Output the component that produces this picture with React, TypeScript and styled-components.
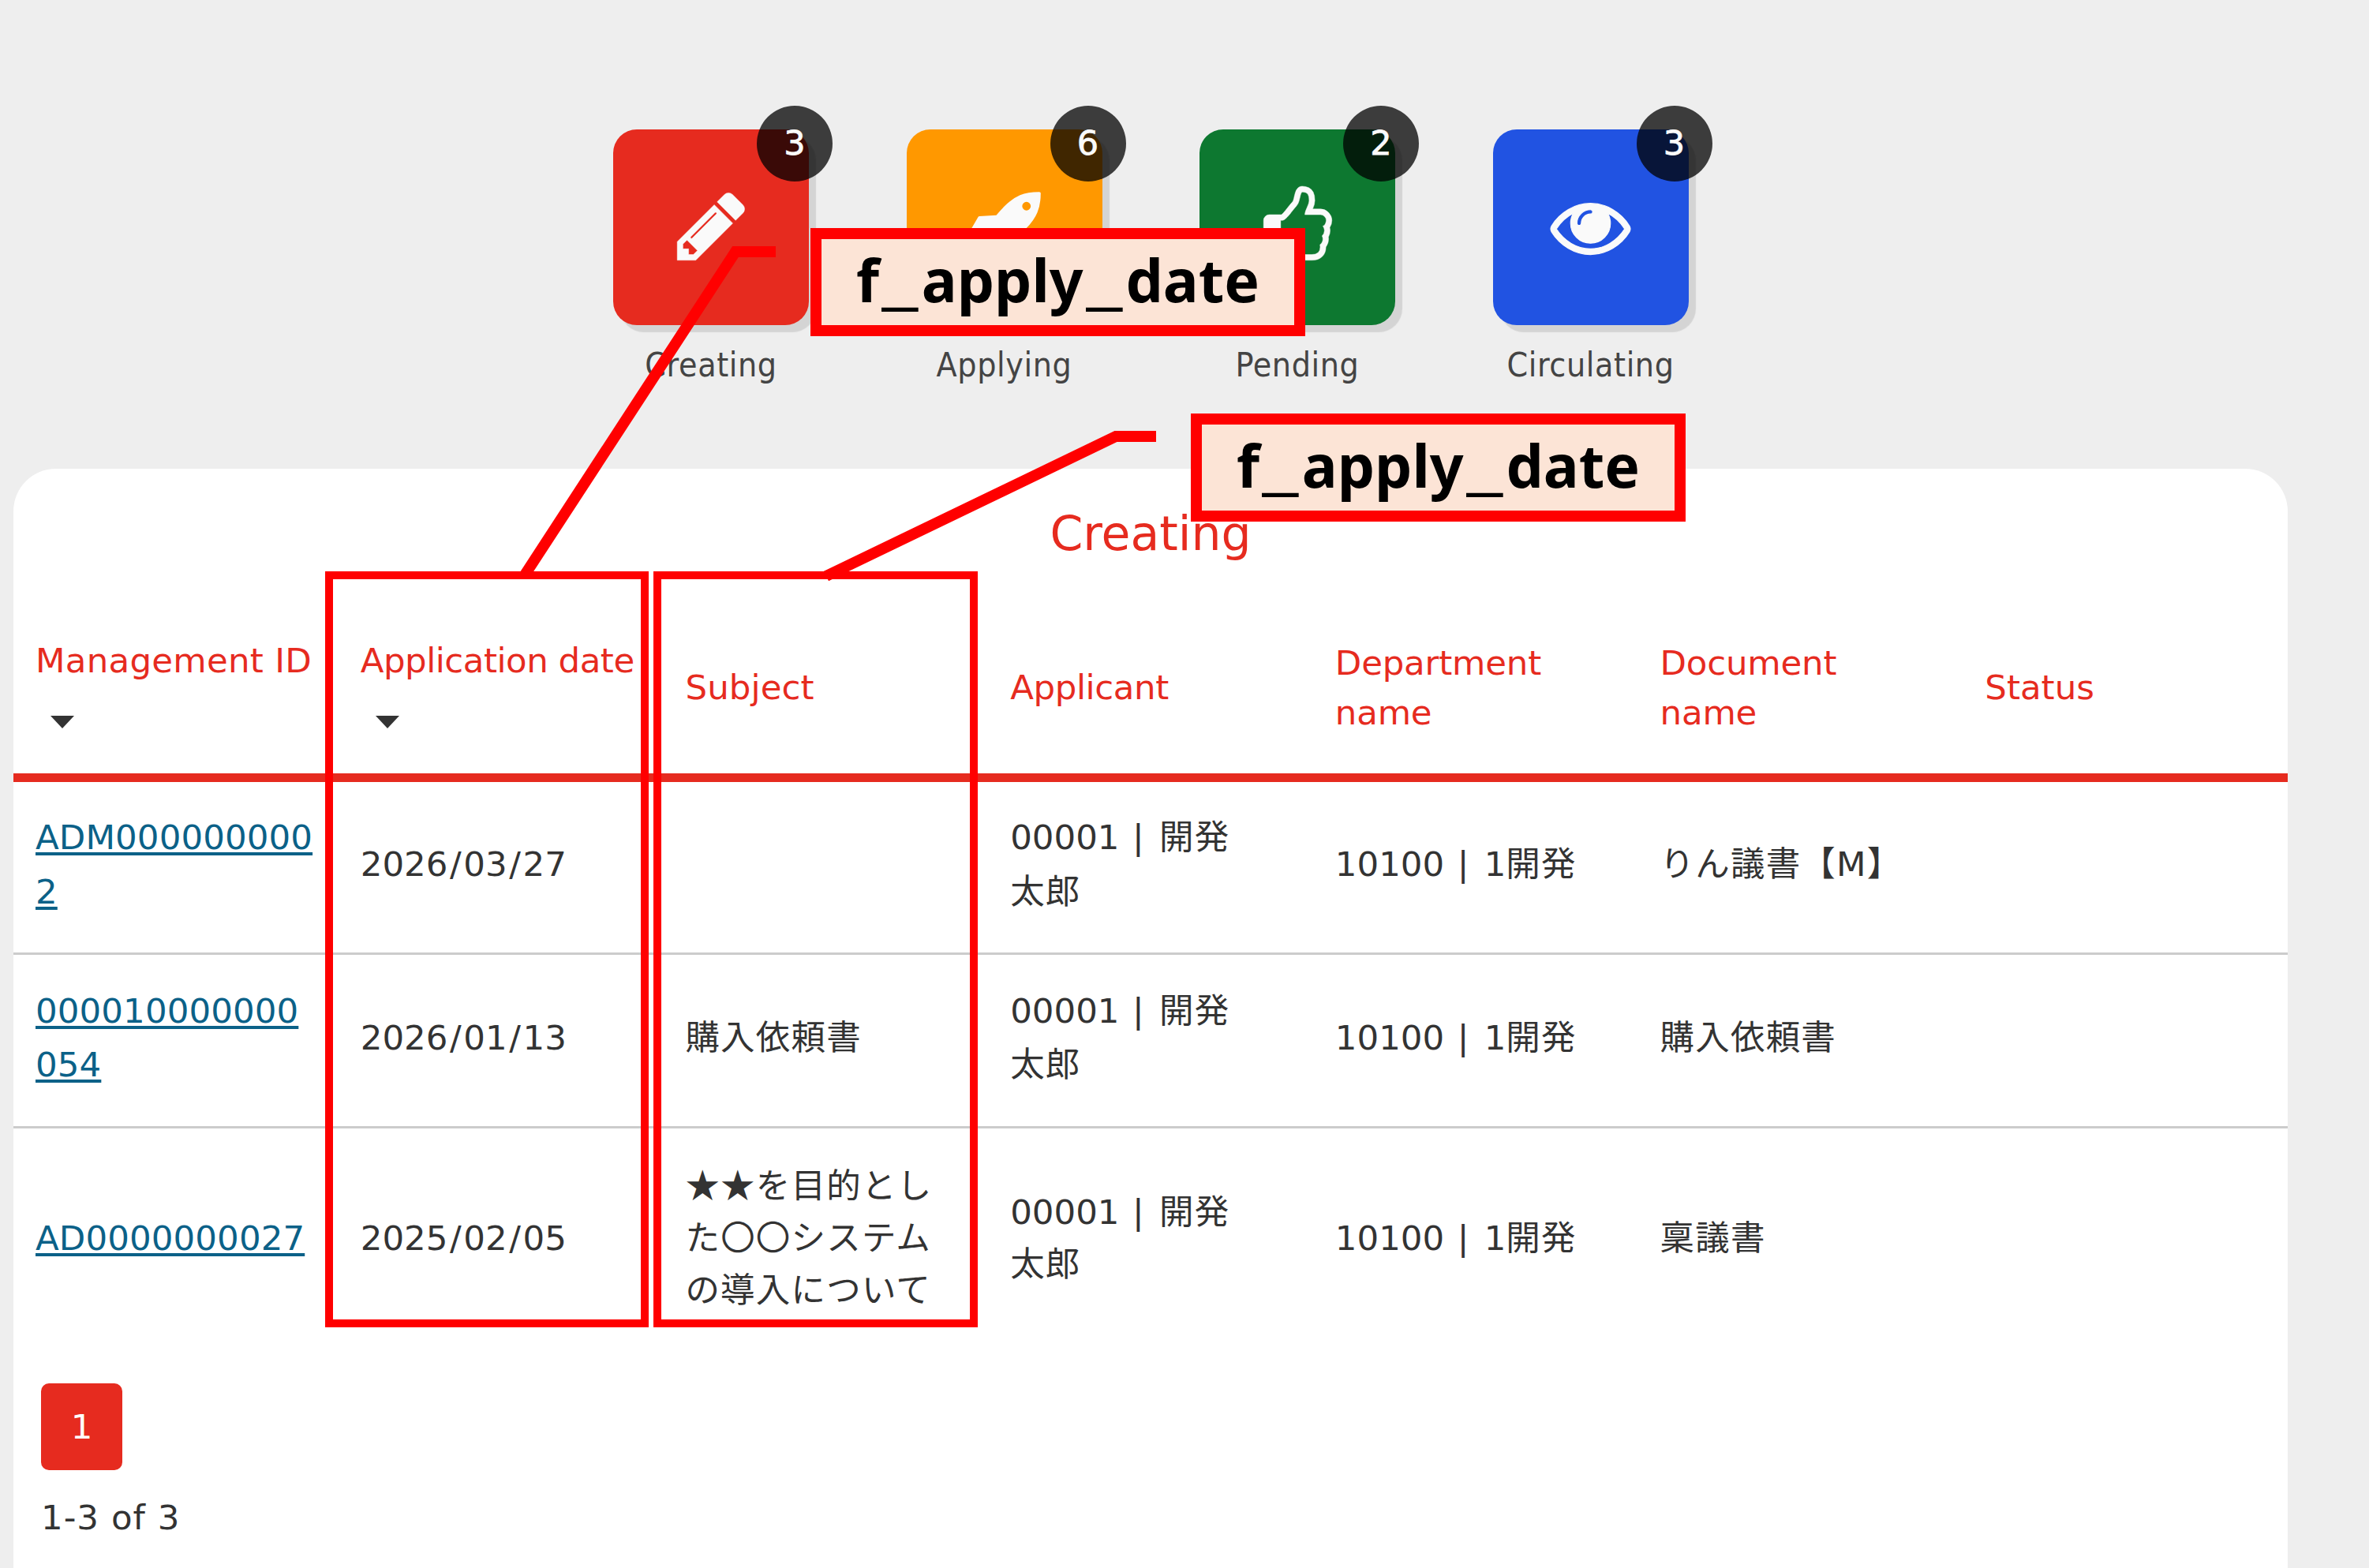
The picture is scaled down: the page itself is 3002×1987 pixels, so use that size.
import React from "react";
import styled, { createGlobalStyle } from "styled-components";

const GlobalStyle = createGlobalStyle`
  *, *::before, *::after { box-sizing: border-box; }
  body { margin: 0; background: #eeeeee; }
`;

const Page = styled.div`
  position: relative;
  width: 3002px;
  height: 1987px;
  overflow: hidden;
  display: flex;
  flex-direction: column;
  background: #eeeeee;
  color: #333333;
  font-family: "DejaVu Sans", "Noto Sans CJK JP", sans-serif;
  font-size: 43.5px;
`;

const TileBar = styled.nav`
  flex: none;
  display: flex;
  gap: 123.5px;
  height: 594px;
  padding: 164px 0 0 777px;
`;

const TileItem = styled.div`
  width: 248px;
  display: flex;
  flex-direction: column;
  align-items: center;
`;

const Tile = styled.div<{ $color: string }>`
  position: relative;
  flex: none;
  display: flex;
  align-items: center;
  justify-content: center;
  width: 248px;
  height: 248px;
  padding-bottom: 4px;
  border-radius: 30px;
  background: ${(p) => p.$color};
  box-shadow: 9px 9px 1px #d4d4d4;
`;

const TileIcon = styled.svg<{ $shift: number; $weight: number }>`
  width: 101px;
  height: 101px;
  margin-left: ${(p) => p.$shift}px;
  fill: #fafafa;
  stroke: #fafafa;
  stroke-width: ${(p) => p.$weight};
  overflow: visible;
`;

const Badge = styled.span`
  position: absolute;
  top: -30px;
  right: -30px;
  width: 96px;
  height: 96px;
  border-radius: 50%;
  background: rgba(0, 0, 0, 0.75);
  color: #fafafa;
  font-size: 43px;
  line-height: 94px;
  text-align: center;
  -webkit-text-stroke: 0.8px #fafafa;
`;

const TileLabel = styled.span`
  margin-top: 20px;
  font-family: "DejaVu Sans Condensed", "DejaVu Sans", sans-serif;
  font-stretch: condensed;
  font-size: 42.5px;
  letter-spacing: 0.6px;
  line-height: 62px;
  white-space: nowrap;
  color: #444444;
`;

const Panel = styled.main`
  flex: 1;
  width: 2882px;
  margin-left: 17px;
  border-radius: 54px 54px 0 0;
  background: #ffffff;
`;

const Title = styled.h1`
  margin: 0;
  font-size: 60px;
  font-weight: 400;
  line-height: 165px;
  text-align: center;
  color: #e62b1f;
`;

const Row = styled.div<{ $height: number; $last?: boolean }>`
  display: grid;
  grid-template-columns: repeat(7, 1fr);
  align-items: center;
  height: ${(p) => p.$height}px;
  padding-bottom: 7px;
  border-bottom: ${(p) => (p.$last ? "none" : "3px solid #cccccc")};
  line-height: ${(p) => (p.$last ? 66 : 68.5)}px;
`;

const HeadRow = styled.div`
  display: grid;
  grid-template-columns: repeat(7, 1fr);
  align-items: center;
  height: 232px;
  padding-top: 4px;
  border-bottom: 11px solid #e62b1f;
  line-height: 62.5px;
  color: #e62b1f;
`;

const Cell = styled.div<{ $tracking?: number }>`
  padding-left: 28px;
  letter-spacing: ${(p) => p.$tracking ?? 0}px;
  white-space: pre;
`;

const SortArrow = styled.span`
  display: block;
  width: 0;
  margin: 38px 0 14px 19px;
  border: 15px solid transparent;
  border-top: 16px solid #333333;
  border-bottom: 0;
`;

const IdLink = styled.a`
  color: #0b6188;
  text-decoration: underline;
  text-decoration-thickness: 4px;
  text-underline-offset: 4px;
`;

const Slash = styled.span`
  padding: 0 2.6px;
`;

const Pipe = styled.span`
  padding: 0 5.5px 0 2.6px;
`;

const Wide = styled.span`
  letter-spacing: 1.2px;
`;

const Star = styled.span`
  font-family: "Noto Sans CJK JP", sans-serif;
  line-height: 0;
`;

const Footer = styled.footer`
  display: flex;
  flex-direction: column;
  align-items: flex-start;
  padding: 38px 0 0 35px;
`;

const PageButton = styled.button`
  width: 103px;
  height: 110px;
  padding: 0;
  border: 0;
  border-radius: 10px;
  background: #e62b1f;
  color: #ffffff;
  font: inherit;
  line-height: 107px;
`;

const Count = styled.span`
  margin-top: 29px;
  letter-spacing: 1px;
  line-height: 62px;
`;

const Highlight = styled.div<{ $left: number; $width: number }>`
  position: absolute;
  left: ${(p) => p.$left}px;
  top: 724px;
  width: ${(p) => p.$width}px;
  height: 958px;
  border: 10px solid #ff0000;
`;

const Callout = styled.div<{ $left: number; $top: number }>`
  position: absolute;
  left: ${(p) => p.$left}px;
  top: ${(p) => p.$top}px;
  width: 627px;
  height: 137px;
  border: 14px solid #ff0000;
  background: #fce4d6;
  color: #000000;
  font-family: "Noto Sans", sans-serif;
  font-size: 75px;
  font-weight: 700;
  line-height: 102px;
  text-align: center;
  white-space: nowrap;
`;

const WideUnderscore = styled.span`
  display: inline-block;
  margin: 0 11.5px;
  transform: scaleX(1.5);
`;

const Leaders = styled.svg`
  position: absolute;
  inset: 0;
  width: 3002px;
  height: 1987px;
  fill: none;
  stroke: #ff0000;
  stroke-width: 14px;
`;

const PENCIL =
  "M491 1536l91-91-235-235-91 91v107h128v128h107zm523-928q0-22-22-22-10 0-17 7l-542 542q-7 7-7 17 0 22 22 22 10 0 17-7l542-542q7-7 7-17zm-54-192l416 416-832 832h-416v-416zm683 96q0 53-37 90l-166 166-416-416 166-165q36-38 90-38 53 0 91 38l235 234q37 39 37 91z";
const ROCKET =
  "M1440 448q0-40-28-68t-68-28-68 28-28 68 28 68 68 28 68-28 28-68zm224-288q0 249-75.5 430.5t-253.5 360.5q-81 80-195 176l-20 379q-2 16-16 26l-384 224q-7 4-16 4-12 0-23-9l-64-64q-13-14-8-32l85-276-281-281-276 85q-3 1-9 1-14 0-23-9l-64-64q-17-19-5-39l224-384q10-14 26-16l379-20q96-114 176-195 188-187 358-258t431-71q14 0 24 9.5t10 22.5z";
const THUMB =
  "M384 1344q0-26-19-45t-45-19-45 19-19 45 19 45 45 19 45-19 19-45zm1152-576q0-51-39-89.5t-89-38.5h-352q0-58 48-159.5t48-160.5q0-98-32-145t-128-47q-26 26-38 85t-30.5 125.5-59.5 109.5q-22 23-77 91-4 5-23 30t-31.5 41-34.5 42.5-40 44-38.5 35.5-40 27-35.5 9h-32v640h32q13 0 31.5 3t33 6.5 38 11 35 11.5 35.5 12.5 29 10.5q211 73 342 73h121q192 0 192-167 0-26-5-56 30-16 47.5-52.5t17.5-73.5-18-69q53-50 53-119 0-25-10-55.5t-25-47.5q32-1 53.5-47t21.5-81zm128-1q0 89-49 163 9 33 9 69 0 77-38 144 3 21 3 43 0 101-60 178 1 139-85 219.5t-227 80.5h-129q-96 0-189.5-22.5t-216.5-65.5q-116-40-138-40h-288q-53 0-90.5-37.5t-37.5-90.5v-640q0-53 37.5-90.5t90.5-37.5h274q36-24 137-155 58-75 107-128 24-25 35.5-85.5t30.5-126.5 62-108q39-37 90-37 84 0 151 32.5t102 101.5 35 186q0 93-48 192h176q104 0 180 76t76 179z";
const EYE =
  "M1664 960q-152-236-381-353 61 104 61 225 0 185-131.5 316.5t-316.5 131.5-316.5-131.5-131.5-316.5q0-121 61-225-229 117-381 353 133 205 333.5 326.5t434.5 121.5 434.5-121.5 333.5-326.5zm-720-384q0-20-14-34t-34-14q-125 0-214.5 89.5t-89.5 214.5q0 20 14 34t34 14 34-14 14-34q0-86 61-147t147-61q20 0 34-14t14-34zm848 384q0 34-20 69-140 230-376.5 368.5t-499.5 138.5-499.5-139-376.5-368q-20-35-20-69t20-69q140-229 376.5-368t499.5-139 499.5 139 376.5 368q20 35 20 69z";

const tiles = [
  { label: "Creating", count: 3, color: "#e62b1f", icon: PENCIL, shift: 0, weight: 8 },
  { label: "Applying", count: 6, color: "#ff9800", icon: ROCKET, shift: 5, weight: 0 },
  { label: "Pending", count: 2, color: "#0d7830", icon: THUMB, shift: 0, weight: 8 },
  { label: "Circulating", count: 3, color: "#2153e2", icon: EYE, shift: 0, weight: 20 },
];

const headers = [
  { text: "Management ID", sortable: true, tracking: 0.25 },
  { text: "Application date", sortable: true, tracking: -0.5 },
  { text: "Subject", tracking: 0.1 },
  { text: "Applicant", tracking: -0.4 },
  { text: "Department\nname", tracking: -0.2 },
  { text: "Document\nname", tracking: -0.2 },
  { text: "Status", tracking: 0 },
];

const rows = [
  { height: 219, id: "ADM000000000\n2", date: "2026/03/27", subject: "", doc: "りん議書【M】" },
  { height: 220, id: "000010000000\n054", date: "2026/01/13", subject: "購入依頼書", doc: "購入依頼書" },
  {
    height: 285,
    id: "AD0000000027",
    date: "2025/02/05",
    subject: "★★を目的とし\nた〇〇システム\nの導入について",
    doc: "稟議書",
  },
];

/* Splits a text into runs and gives slashes, pipes, stars and kanji their own spacing. */
const spaced = (text: string) =>
  text.split(/([/|]|★+|[\u3040-\u9fff]+)/).map((part, i) => {
    if (i % 2 === 0) return part;
    if (part === "/") return <Slash key={i}>{part}</Slash>;
    if (part === "|") return <Pipe key={i}>{part}</Pipe>;
    if (part[0] === "★") return <Star key={i}>{part}</Star>;
    return <Wide key={i}>{part}</Wide>;
  });

const CalloutText = () => (
  <>
    f<WideUnderscore>_</WideUnderscore>apply<WideUnderscore>_</WideUnderscore>date
  </>
);

export default function App() {
  return (
    <>
      <GlobalStyle />
      <Page>
        <TileBar>
          {tiles.map((t) => (
            <TileItem key={t.label}>
              <Tile $color={t.color}>
                <TileIcon viewBox="0 0 1792 1792" $shift={t.shift} $weight={t.weight}>
                  <path d={t.icon} />
                </TileIcon>
                <Badge>{t.count}</Badge>
              </Tile>
              <TileLabel>{t.label}</TileLabel>
            </TileItem>
          ))}
        </TileBar>
        <Panel>
          <Title>Creating</Title>
          <HeadRow>
            {headers.map((h) => (
              <Cell key={h.text} $tracking={h.tracking}>
                {h.text}
                {h.sortable && <SortArrow />}
              </Cell>
            ))}
          </HeadRow>
          {rows.map((r, i) => (
            <Row key={r.id} $height={r.height} $last={i === rows.length - 1}>
              <Cell $tracking={0.1}>
                <IdLink>{r.id}</IdLink>
              </Cell>
              <Cell>{spaced(r.date)}</Cell>
              <Cell>
                <Wide>{spaced(r.subject)}</Wide>
              </Cell>
              <Cell>{spaced("00001 | 開発\n太郎")}</Cell>
              <Cell>{spaced("10100 | 1開発")}</Cell>
              <Cell>
                <Wide>{r.doc}</Wide>
              </Cell>
              <Cell />
            </Row>
          ))}
          <Footer>
            <PageButton>1</PageButton>
            <Count>1-3 of 3</Count>
          </Footer>
        </Panel>
        <Highlight $left={412} $width={410} />
        <Highlight $left={828} $width={411} />
        <Leaders viewBox="0 0 3002 1987">
          <polyline points="983,319 932,319 664,730" />
          <polyline points="1465,553 1414,553 1047,730" />
        </Leaders>
        <Callout $left={1027} $top={289}>
          <CalloutText />
        </Callout>
        <Callout $left={1509} $top={523.5}>
          <CalloutText />
        </Callout>
      </Page>
    </>
  );
}
